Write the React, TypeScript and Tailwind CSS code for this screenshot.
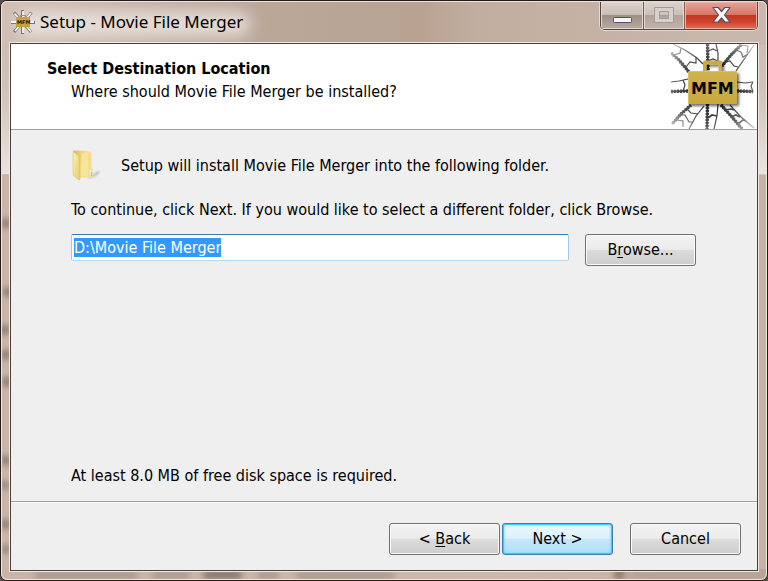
import React, { useEffect, useRef, useState } from "react";

const pushButton =
  "h-8 w-[111px] shrink-0 rounded-[3px] border border-[#707070] bg-[linear-gradient(#f3f3f3_0%,#ebebeb_48%,#dcdcdc_50%,#cdcdcd_100%)] text-center leading-5 shadow-[inset_0_0_0_1px_#fafafa]";
const defaultButton =
  "h-8 w-[111px] shrink-0 rounded-[3px] border border-[#3c7fb1] bg-[linear-gradient(#ecf7fd_0%,#ddf1fb_48%,#c6e7f9_50%,#ade0f8_100%)] text-center leading-5 shadow-[inset_0_0_0_1px_#35ccf8,inset_0_0_3px_1px_#5ed6fa]";

/* Blurred desktop that shows through the glass frame */
function Glass() {
  return (
    <svg className="absolute inset-0 h-full w-full" viewBox="0 0 768 581" preserveAspectRatio="none" aria-hidden="true">
      <defs>
        <linearGradient id="bar" x1="0" x2="1" y1="0" y2="0">
          <stop offset="0" stopColor="#cfbfb5" />
          <stop offset="0.3" stopColor="#baa899" />
          <stop offset="0.55" stopColor="#b8a393" />
          <stop offset="0.62" stopColor="#c2aea0" />
          <stop offset="1" stopColor="#c8b8ad" />
        </linearGradient>
        <linearGradient id="side" x1="0" x2="0" y1="0" y2="1">
          <stop offset="0" stopColor="#cbbab0" />
          <stop offset="0.5" stopColor="#cfc2b9" />
          <stop offset="1" stopColor="#e9e3df" />
        </linearGradient>
        <linearGradient id="foot" x1="0" x2="1" y1="0" y2="0">
          <stop offset="0" stopColor="#c8b5a7" />
          <stop offset="0.65" stopColor="#cdb9aa" />
          <stop offset="0.8" stopColor="#c9b5a7" />
          <stop offset="0.83" stopColor="#b9a497" />
          <stop offset="1" stopColor="#b8a598" />
        </linearGradient>
        <filter id="soft" x="-30%" y="-60%" width="160%" height="220%">
          <feGaussianBlur stdDeviation="3" />
        </filter>
        <filter id="glow" x="-20%" y="-80%" width="140%" height="260%">
          <feGaussianBlur stdDeviation="8" />
        </filter>
      </defs>
      <rect width="768" height="581" fill="#c6b2a5" />
      <rect width="768" height="174" fill="url(#side)" />
      <rect width="768" height="44" fill="url(#bar)" />
      <rect x="16" y="10" width="234" height="26" rx="12" fill="#f0e9e5" opacity="0.8" filter="url(#glow)" />
      <rect y="174" width="11" height="397" fill="#cab6a9" />
      <rect y="570" width="768" height="11" fill="url(#foot)" />
      <g fill="#85766d" filter="url(#soft)">
        <circle cx="5" cy="223" r="5" />
        <circle cx="7" cy="292" r="5" />
        <circle cx="4" cy="330" r="5" />
        <circle cx="5" cy="355" r="5" />
        <circle cx="6" cy="382" r="5" />
        <circle cx="5" cy="461" r="5" />
        <circle cx="4" cy="486" r="4" />
        <circle cx="5" cy="525" r="5" />
        <circle cx="5" cy="550" r="4" />
      </g>
      <g fill="#8f7f75" opacity="0.8" filter="url(#soft)">
        <rect x="34" y="574" width="102" height="5" />
        <rect x="152" y="574" width="36" height="5" />
        <rect x="203" y="572" width="38" height="8" fill="#6f6159" />
        <rect x="258" y="574" width="20" height="5" />
        <rect x="296" y="574" width="98" height="5" />
        <rect x="615" y="570" width="9" height="10" fill="#7a6248" />
      </g>
    </svg>
  );
}

function MergerLogo() {
  return (
    <svg className="h-[85px] w-[84px] shrink-0" viewBox="0 0 84 85" role="img" aria-label="MFM">
      <defs>
        <radialGradient id="film" gradientUnits="userSpaceOnUse" cx="42" cy="43" r="56">
          <stop offset="0.35" stopColor="#262626" />
          <stop offset="0.7" stopColor="#5c5c5c" />
          <stop offset="1" stopColor="#bdbdbd" />
        </radialGradient>
        <linearGradient id="case" x1="0" x2="0" y1="0" y2="1">
          <stop offset="0" stopColor="#d0b34f" />
          <stop offset="1" stopColor="#c8a840" />
        </linearGradient>
        <filter id="drop" x="-20%" y="-20%" width="150%" height="150%">
          <feDropShadow dx="2" dy="2" stdDeviation="1.5" floodColor="#000" floodOpacity="0.6" />
        </filter>
      </defs>
      <g fill="none" stroke="url(#film)">
        <path d="M0 9 8 16 18 28M36.5 0 37 26M70 1 60 11 51 22M0 47.5 17 47M66 47 82 47.5M20 61 10 70 1 80M36.5 60 36 85M50 61 61 73 71 85" strokeWidth="2" />
        <path d="M0 9 8 16 18 28M36.5 0 37 26M70 1 60 11 51 22M0 47.5 17 47M66 47 82 47.5M20 61 10 70 1 80M36.5 60 36 85M50 61 61 73 71 85" strokeWidth="3.4" strokeDasharray="2 1" />
        <g strokeWidth="1.2">
          <path d="M2 0 14 6 26 14 32 20M45 0 47 9 47 18M83 1 74 14 65 27M0 38 8 37 17 35M66 38 74 39 82 38M33 62 25 72 18 85M47 60 46 72 43 85M59 61 70 73 83 84" />
          <path d="M3 11 9 9 10 4M15 23 19 18 25 19 25 13M37 7 42 5 46 7M37 17 42 15 47 17M65 6 70 8 72 13 77 10M54 18 59 17 63 22 67 23M70 1 77 2 76 9" />
          <path d="M12 36 14 41 12 47M82 38 80 42 82 48M5 76 12 77 12 83M16 65 20 69 27 70M8 71 14 71 18 78 22 78" />
          <path d="M37 74 41 71 46 72M54 66 60 65 63 66M60 73 65 71 69 73M67 80 72 76 75 77" strokeWidth="1.7" />
        </g>
      </g>
      <g filter="url(#drop)">
        <path d="M32 28V18.500q0-2 2-2h15q2 0 2 2V28h-3.500v-7.500H35.500V28Z" fill="#c9aa45" />
        <rect x="17" y="27" width="49" height="33" rx="1.5" fill="url(#case)" />
      </g>
      <path d="M17.5 59V28.5q0-1 1-1H65" fill="none" stroke="#dcc468" strokeWidth="0.8" />
      <text x="20" y="50" fontSize="16" fontWeight="700" fontFamily="DejaVu Sans, sans-serif" fill="#080808">MFM</text>
    </svg>
  );
}

function TitleIcon() {
  return (
    <svg className="h-6 w-6 shrink-0" viewBox="0 0 24 24" aria-hidden="true">
      <path d="M11.5 0V24M0 12.5H24M3 2.5 20 22M20.5 2.5 3 22" stroke="#77736f" strokeWidth="3" />
      <path d="M12 1V23M0 12H23M3.5 3.5 20 21.5M20 3 4 21" stroke="#f8f8f8" strokeWidth="1.8" />
      <path d="M9.500 8V5.500h5V8" fill="none" stroke="#b1943b" strokeWidth="1.2" />
      <rect x="5" y="7" width="14" height="10" fill="#c4a23c" />
      <text x="6" y="14" fontSize="5" fontWeight="700" fontFamily="DejaVu Sans, sans-serif" fill="#1d1706">MFM</text>
    </svg>
  );
}

function FolderIcon() {
  return (
    <svg className="h-8 w-8 shrink-0" viewBox="0 0 32 32" aria-hidden="true">
      <defs>
        <linearGradient id="leaf" x1="0" x2="1" y1="0" y2="1">
          <stop offset="0" stopColor="#fbf1b3" />
          <stop offset="1" stopColor="#e9ca68" />
        </linearGradient>
        <linearGradient id="back" x1="0" x2="1" y1="0" y2="0">
          <stop offset="0" stopColor="#d9b44b" />
          <stop offset="0.5" stopColor="#efd67c" />
          <stop offset="1" stopColor="#f9eaa9" />
        </linearGradient>
        <filter id="fs" x="-40%" y="-40%" width="180%" height="180%">
          <feGaussianBlur stdDeviation="1.2" />
        </filter>
      </defs>
      <path d="M14 27 21 26 27 21 29 21 26 25 20 28Z" fill="#8a8a8a" opacity="0.6" filter="url(#fs)" />
      <path d="M2 1 4 .5 18 1 20 2V27L8 27.5Z" fill="url(#back)" />
      <path d="M10 3.500 18 2 20.500 3V18L21.500 19V27H9Z" fill="#f3dd8b" />
      <path d="M11 4 17 3V26.500H10Z" fill="#f8e8a6" opacity="0.7" />
      <path d="M19.500 20v5.500" stroke="#fff" strokeWidth="1.4" />
      <path d="M20.300 22v4" stroke="#55a7df" strokeWidth="0.8" />
      <path d="M2 1.500 8 6 9 29.500 8 30 2 25Z" fill="url(#leaf)" stroke="#dcb955" strokeWidth="0.5" />
    </svg>
  );
}

function CaptionButtons() {
  return (
    <div className="mr-px flex h-[28px] overflow-hidden rounded-b-[5px] border border-t-0 border-[#51443f] shadow-[0_0_0_1px_#e4d9d2]">
      <button
        aria-label="Minimize"
        className="flex w-[43px] justify-center border-r border-[#6d5f58] bg-[linear-gradient(#dcd2cc_0%,#c9bdb6_48%,#9e8f87_50%,#bba99e_100%)] pt-[15px] shadow-[inset_0_0_0_1px_#e2d9d3]"
      >
        <svg width="19" height="7" viewBox="0 0 19 7" aria-hidden="true">
          <rect x="0.5" y="0.5" width="18" height="5" rx="1" fill="#f6f6f6" stroke="#4d5268" />
        </svg>
      </button>
      <button
        aria-label="Maximize"
        disabled
        className="flex w-[41px] justify-center border-r border-[#8e5c52] bg-[linear-gradient(#dcd2cc_0%,#cbc0b9_48%,#b1a299_50%,#c4b5ab_100%)] pt-[5px] shadow-[inset_0_0_0_1px_#e2d9d3]"
      >
        <svg width="20" height="17" viewBox="0 0 20 17" aria-hidden="true">
          <path d="M.5.5h19v15H.5ZM5.500 4.500v7h9v-7Z" fill="#d6d0cc" fillRule="evenodd" stroke="#a59b95" />
        </svg>
      </button>
      <button
        aria-label="Close"
        className="flex w-[72px] justify-center bg-[linear-gradient(#e3a598_0%,#d87465_48%,#c43620_50%,#d2452b_75%,#dc7259_100%)] pt-1 shadow-[inset_0_0_0_1px_#eeb3a6]"
      >
        <svg width="19" height="18" viewBox="0 0 19 18" aria-hidden="true">
          <path
            d="M1 1.500H6.200L9.500 5.500 12.800 1.500H18L12.500 9 18 16H12.800L9.500 12 6.200 16H1L6.500 9Z"
            fill="#f7f7f7"
            stroke="#534e63"
            strokeWidth="1.2"
            strokeLinejoin="round"
          />
        </svg>
      </button>
    </div>
  );
}

export default function App() {
  const [folder, setFolder] = useState("D:\\Movie File Merger");
  const field = useRef<HTMLInputElement>(null);

  useEffect(() => {
    field.current?.focus();
    field.current?.select();
  }, []);

  return (
    <div className="flex min-h-screen bg-[#55504e] font-['DejaVu_Sans_Condensed','DejaVu_Sans',sans-serif] text-[16px] leading-5 text-black">
      <div className="relative flex flex-1 flex-col overflow-hidden rounded-[7px] border border-[#211a1b]">
        <Glass />
        <div className="relative flex flex-1 flex-col rounded-[6px] border border-[#f0e6e0] px-[7px] pb-[7px]">
          <header className="flex h-10 items-start justify-between pl-[2px]">
            <div className="flex items-center gap-[5px] pt-2">
              <TitleIcon />
              <h1 className="font-['Noto_Sans',sans-serif] text-[17px] leading-6">Setup - Movie File Merger</h1>
            </div>
            <CaptionButtons />
          </header>

          <div className="flex flex-1 flex-col border border-[#f1e9e4]">
            <main className="flex flex-1 flex-col border border-[#4b403c] bg-[#efefef]">
              <section className="flex justify-between border-b border-[#a0a0a0] bg-white pr-[2px]">
                <div className="pt-[13px] pl-9 leading-[23px]">
                  <h2 className="font-bold">Select Destination Location</h2>
                  <p className="pl-6">Where should Movie File Merger be installed?</p>
                </div>
                <MergerLogo />
              </section>

              <section className="flex flex-1 flex-col border-b border-[#a0a0a0] pt-5 pr-[61px] pb-[15px] pl-[60px]">
                <div className="flex items-center gap-[18px]">
                  <FolderIcon />
                  <p>Setup will install Movie File Merger into the following folder.</p>
                </div>
                <label htmlFor="folder" className="mt-[18px]">
                  To continue, click Next. If you would like to select a different folder, click Browse.
                </label>
                <div className="mt-[14px] flex items-start gap-4">
                  <input
                    ref={field}
                    id="folder"
                    type="text"
                    value={folder}
                    onChange={(e) => setFolder(e.target.value)}
                    className="h-[27px] min-w-0 flex-1 rounded-[2px] border border-[#a4c9e3] border-t-[#3d7bad] border-b-[#b7d9ed] bg-white px-[2px] outline-none selection:bg-[#3399ff] selection:text-white"
                  />
                  <button className={pushButton}>
                    B<span className="underline underline-offset-2">r</span>owse...
                  </button>
                </div>
                <p className="mt-auto">At least 8.0 MB of free disk space is required.</p>
              </section>

              <footer className="flex justify-end border-t border-white pt-5 pr-4 pb-[15px]">
                <div className="flex gap-[2px]">
                  <button className={pushButton}>
                    &lt; <span className="underline underline-offset-2">B</span>ack
                  </button>
                  <button className={defaultButton}>Next &gt;</button>
                </div>
                <button className={`${pushButton} ml-[17px]`}>Cancel</button>
              </footer>
            </main>
          </div>
        </div>
      </div>
    </div>
  );
}
